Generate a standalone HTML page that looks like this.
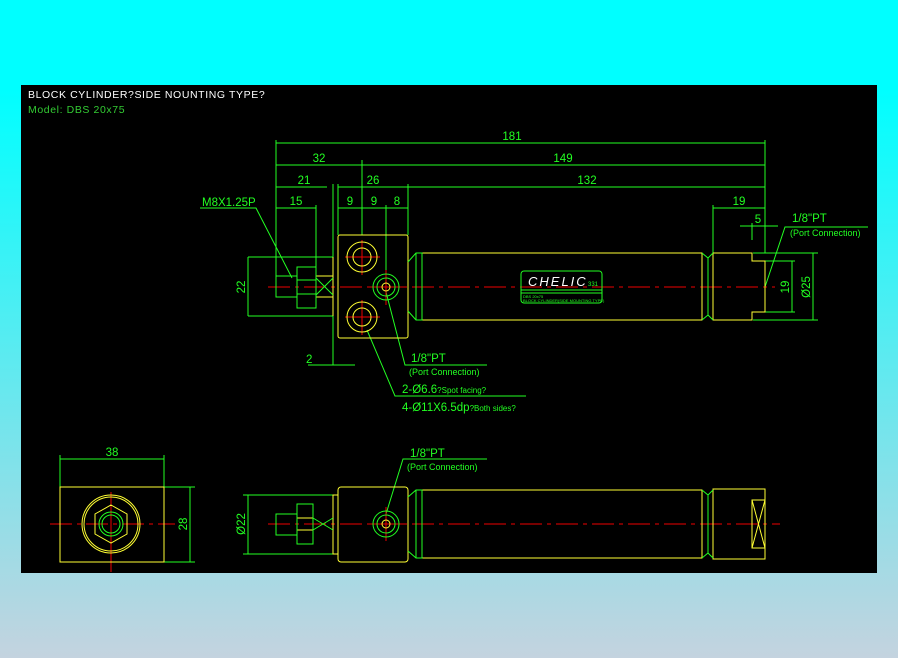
<!DOCTYPE html>
<html><head><meta charset="utf-8"><style>
html,body{margin:0;padding:0;width:898px;height:658px;overflow:hidden;background:linear-gradient(#00ffff 0px,#00ffff 90px,#c4d3df 658px);}
svg{position:absolute;left:0;top:0}
text{font-family:"Liberation Sans",sans-serif;}
</style></head><body>
<svg width="898" height="658" viewBox="0 0 898 658">
<rect x="21" y="85" width="856" height="488" fill="#000"/>
<text x="28" y="98" fill="#fff" font-size="10.5" letter-spacing="0.6">BLOCK CYLINDER?SIDE NOUNTING TYPE?</text>
<text x="28" y="113" fill="#3c3" font-size="10.5" letter-spacing="0.6">Model: DBS 20x75</text>

<g stroke="#2f2" stroke-width="1" fill="none">
<path d="M276 140V280M765 140V253M362 160V235M333 184V365M338 184V235M408 184V235M316 205V277M386 205V280M713 205V253M752 223V240M308 365H355"/>
<path d="M276 143H765M276 165H765M276 187H327M338 187H408M408 187H765M276 208H316M338 208H408M713 208H765M740 226H778M248 257H333M248 316H333M248 257V316M765 261H795M765 312H795M792 261V312M753 253H818M753 320H818M813 253V320"/>
<path d="M200 208H256L292 278M487 365H405L386 292M526 396H395L367 330M868 227H785L765 287M487 459H403L386 514"/>
<path d="M60 455V487M164 455V487M60 459H164M164 487H195M164 562H195M190 487V562M243 495H333M243 554H333M248 495V554"/>
</g>
<g fill="#2f2" font-size="11.5">
<text x="512" y="140" text-anchor="middle">181</text>
<text x="319" y="162" text-anchor="middle">32</text>
<text x="563" y="162" text-anchor="middle">149</text>
<text x="304" y="184" text-anchor="middle">21</text>
<text x="373" y="184" text-anchor="middle">26</text>
<text x="587" y="184" text-anchor="middle">132</text>
<text x="296" y="205" text-anchor="middle">15</text>
<text x="350" y="205" text-anchor="middle">9</text>
<text x="374" y="205" text-anchor="middle">9</text>
<text x="397" y="205" text-anchor="middle">8</text>
<text x="739" y="205" text-anchor="middle">19</text>
<text x="758" y="223" text-anchor="middle">5</text>
<text x="202" y="206">M8X1.25P</text>
<text x="306" y="363">2</text>
<text x="792" y="222">1/8"PT</text>
<text x="790" y="236" font-size="9">(Port Connection)</text>
<text x="411" y="362">1/8"PT</text>
<text x="409" y="375" font-size="9">(Port Connection)</text>
<text x="402" y="393">2-Ø6.6<tspan font-size="8">?Spot facing?</tspan></text>
<text x="402" y="411">4-Ø11X6.5dp<tspan font-size="8">?Both sides?</tspan></text>
<text transform="translate(245,287) rotate(-90)" text-anchor="middle">22</text>
<text transform="translate(789,287) rotate(-90)" text-anchor="middle">19</text>
<text transform="translate(810,287) rotate(-90)" text-anchor="middle">Ø25</text>
<text x="112" y="456" text-anchor="middle">38</text>
<text transform="translate(187,524) rotate(-90)" text-anchor="middle">28</text>
<text transform="translate(245,524) rotate(-90)" text-anchor="middle">Ø22</text>
<text x="410" y="457">1/8"PT</text>
<text x="407" y="470" font-size="9">(Port Connection)</text>
</g>

<g stroke="#e00" stroke-width="1" stroke-dasharray="22,5,4,5" fill="none">
<path d="M268 287H775M268 524H780M50 524H175"/>
</g>
<g stroke="#e00" stroke-width="1" fill="none">
<path d="M362 240V275M345 257H380M362 300V335M345 317H380M386 270V305M369 287H403M111 492V572M386 507V541M369 524H403"/>
</g>

<g stroke="#ff3" stroke-width="1" fill="none">
<rect x="338" y="235" width="70" height="103" rx="2"/>
<circle cx="362" cy="257" r="15"/><circle cx="362" cy="257" r="9"/>
<circle cx="362" cy="317" r="15"/><circle cx="362" cy="317" r="9"/>
<circle cx="386" cy="287" r="4"/>
<path d="M333 257V316M316 276H333V297H316M422 253H702V320H422Z"/>
<path d="M713 253H752V261H765V312H752V320H713Z"/>
<path d="M60 487H164V562H60Z"/>
<circle cx="111" cy="524" r="29"/><circle cx="111" cy="524" r="27"/>
<path d="M111 505L127 514V534L111 543L95 534V514Z"/>
<rect x="338" y="487" width="70" height="75" rx="3"/>
<circle cx="386" cy="524" r="4"/>
<path d="M333 495H338V554H333ZM297 514V518H313M297 535V530H313M422 490H702V558H422Z"/>
<path d="M713 489H765V559H713ZM752 500H765V548H752ZM752 500L765 548M765 500L752 548"/>
</g>
<g stroke="#2f2" stroke-width="1" fill="none">
<circle cx="386" cy="287" r="13"/><circle cx="386" cy="287" r="9"/>
<path d="M276 276H297V297H276ZM297 267H316V308H297ZM297 280H316M297 294H316M316 278L333 295M316 295L333 278"/>
<path d="M408 262L416 253H422V320H416L408 311M416 253V320M702 253L708 258V315L702 320M708 258L713 253M708 315L713 320"/>
<rect x="521" y="271" width="81" height="32" rx="3"/>
<path d="M521 290H602M521 293H602"/>
<circle cx="111" cy="524" r="12"/><circle cx="111" cy="524" r="9"/>
<circle cx="386" cy="524" r="13"/><circle cx="386" cy="524" r="9"/>
<path d="M276 514H297V535H276ZM297 504H313V544H297ZM313 518L333 530M313 530L333 518M408 497L416 490H422V558H416L408 551M416 490V558M702 490L708 495V553L702 558M708 495L713 490M708 553L713 558"/>
</g>
<text x="528" y="286" fill="#fff" font-size="13" font-style="italic" letter-spacing="2">CHELIC</text>
<text x="588" y="286" fill="#2f2" font-size="6">331</text>
<text x="523" y="298" fill="#2f2" font-size="4">DBS 20x75</text>
<text x="523" y="302" fill="#2f2" font-size="4">BLOCK CYLINDER(SIDE MOUNTING TYPE)</text>
</svg>
</body></html>
